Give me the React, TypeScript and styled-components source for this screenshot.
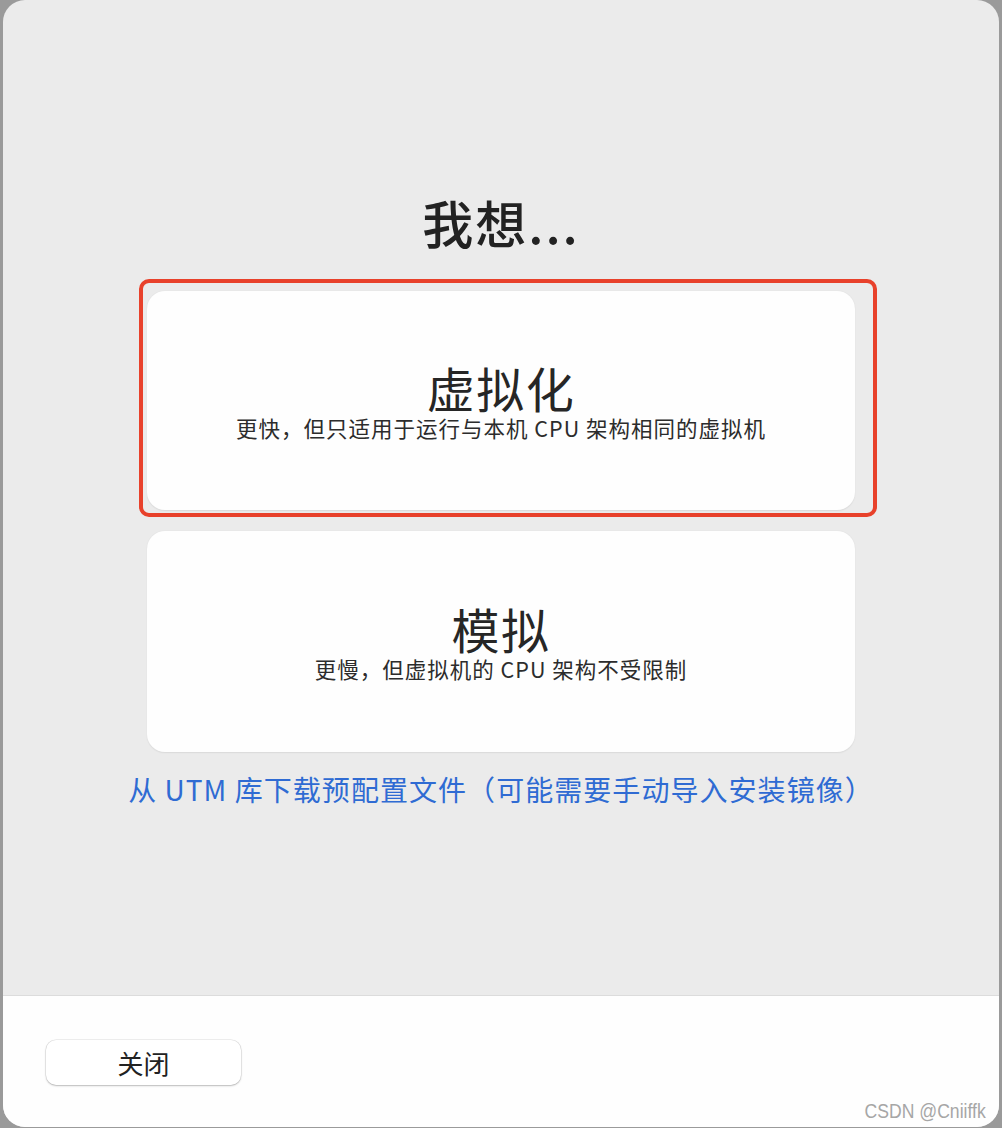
import React from "react";
import styled, { createGlobalStyle } from "styled-components";

const Global = createGlobalStyle`
  html, body {
    margin: 0;
    padding: 0;
    background: #9a9a9a;
  }
  body {
    font-family: "Noto Sans CJK SC", "Noto Sans", sans-serif;
  }
`;

const Window = styled.div`
  position: relative;
  box-sizing: border-box;
  width: 996px;
  height: 1127px;
  margin-left: 3px;
  border-radius: 22px;
  overflow: hidden;
  display: flex;
  flex-direction: column;
  background: #ebebeb;
`;

const Main = styled.main`
  height: 996px;
  flex: none;
  box-sizing: border-box;
  padding-top: 192px;
  display: flex;
  flex-direction: column;
  align-items: center;
  border-bottom: 1px solid #dcdcdc;
`;

const Title = styled.h1`
  margin: 0 0 39px;
  font-size: 51px;
  line-height: 60px;
  font-weight: 500;
  letter-spacing: 2px;
  color: #222;
`;

const Cards = styled.div`
  display: flex;
  flex-direction: column;
  gap: 21px;
`;

const CardWrap = styled.div`
  position: relative;
`;

const Card = styled.button<{ $h: number }>`
  box-sizing: border-box;
  width: 708px;
  height: ${(p) => p.$h}px;
  border: none;
  border-radius: 18px;
  background: #fefefe;
  box-shadow: 0 0.5px 1.5px rgba(0, 0, 0, 0.08);
  display: flex;
  flex-direction: column;
  align-items: center;
  justify-content: center;
  font-family: inherit;
  padding: 0;
  cursor: pointer;
`;

const CardTitle = styled.span`
  display: block;
  font-size: 48px;
  line-height: 55px;
  font-weight: 400;
  letter-spacing: 1.5px;
  color: #262626;
`;

const CardSub = styled.span`
  display: block;
  font-size: 21.5px;
  line-height: 26px;
  color: #2c2c2c;
  letter-spacing: 1px;
`;

const Highlight = styled.div`
  position: absolute;
  top: -12px;
  left: -8px;
  right: -22px;
  bottom: -7px;
  border: 4px solid #e8412b;
  border-radius: 10px;
  pointer-events: none;
`;

const Link = styled.a`
  margin-top: 20px;
  font-size: 28px;
  line-height: 34px;
  color: #2f6bd3;
  text-decoration: none;
  letter-spacing: 1.05px;
  cursor: pointer;
`;

const Footer = styled.footer`
  flex: 1;
  background: #fefefe;
  box-sizing: border-box;
  padding: 44px 0 0 43px;
`;

const CloseButton = styled.button`
  width: 195px;
  height: 45px;
  border: none;
  border-radius: 10px;
  background: #fff;
  box-shadow: 0 1px 2px rgba(0, 0, 0, 0.22), 0 0 0 0.5px rgba(0, 0, 0, 0.12);
  font-family: inherit;
  font-size: 26px;
  line-height: 45px;
  color: #222;
  padding: 0;
  cursor: pointer;
`;

const Watermark = styled.span`
  position: absolute;
  right: 13px;
  bottom: 4px;
  font-family: "Liberation Sans", Arial, sans-serif;
  font-size: 20px;
  color: #a6a6a6;
  transform: scaleX(0.88);
  transform-origin: right center;
`;

export default function App() {
  return (
    <>
      <Global />
      <Window>
        <Main>
          <Title>我想...</Title>
          <Cards>
            <CardWrap>
              <Card $h={219}>
                <CardTitle>虚拟化</CardTitle>
                <CardSub>更快，但只适用于运行与本机 CPU 架构相同的虚拟机</CardSub>
              </Card>
              <Highlight />
            </CardWrap>
            <CardWrap>
              <Card $h={221}>
                <CardTitle>模拟</CardTitle>
                <CardSub>更慢，但虚拟机的 CPU 架构不受限制</CardSub>
              </Card>
            </CardWrap>
          </Cards>
          <Link>从 UTM 库下载预配置文件（可能需要手动导入安装镜像）</Link>
        </Main>
        <Footer>
          <CloseButton>关闭</CloseButton>
        </Footer>
        <Watermark>CSDN @Cniiffk</Watermark>
      </Window>
    </>
  );
}
